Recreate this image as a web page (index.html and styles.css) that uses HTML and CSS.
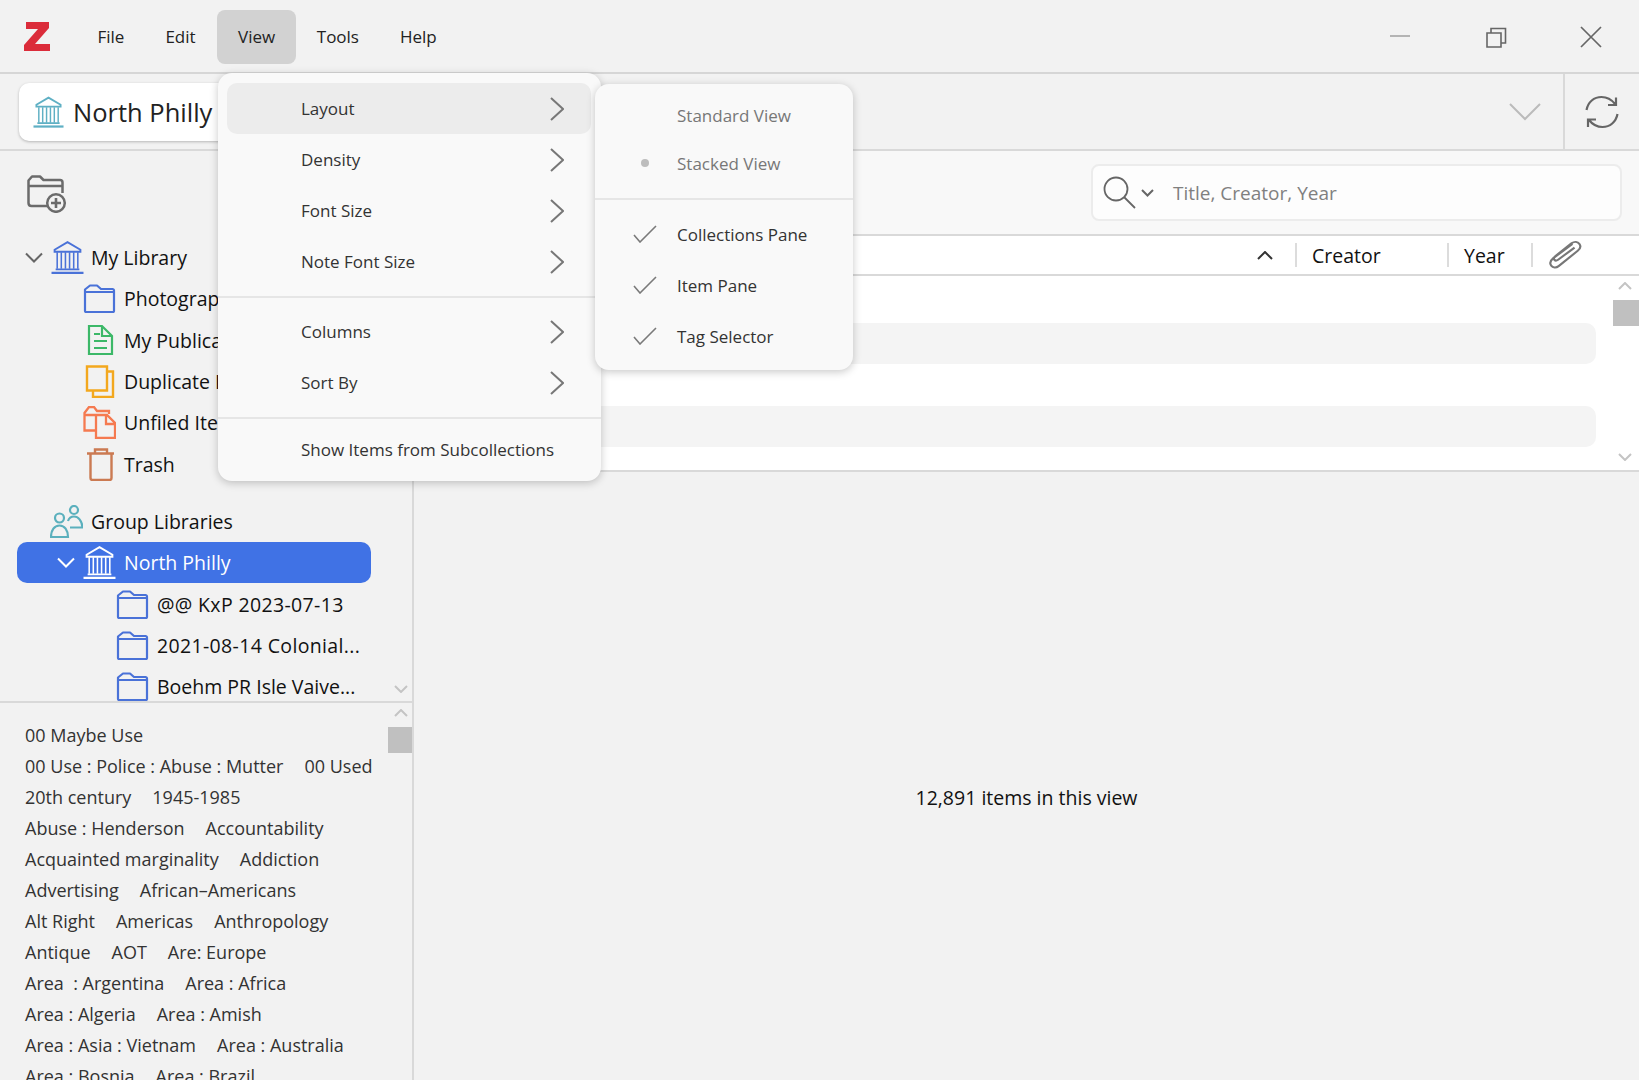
FILE: index.html
```html
<!DOCTYPE html>
<html lang="en">
  <head>
    <meta charset="UTF-8" />
    <meta name="viewport" content="width=device-width, initial-scale=1.0" />
    <title>Zotero</title>
    <link rel="stylesheet" href="styles.css">
  </head>
  <body>
    <svg class="defs" width="0" height="0">
      <symbol id="library" viewBox="0 0 32 32">
        <path d="M3.500 8.500 16 1.200l12.500 7.300v2h-25z M4.500 27.500h23" fill="none" stroke="currentColor" stroke-width="1.900"/>
        <path d="M0.500 31h31" fill="none" stroke="currentColor" stroke-width="2.300"/>
        <path d="M6 11v16 M10 11v16 M14 11v16 M18 11v16 M22 11v16 M26 11v16" fill="none" stroke="currentColor" stroke-width="1.500"/>
      </symbol>
      <symbol id="folder" viewBox="0 0 33 29">
        <path d="M2 8V5.500L7 1.500h7l4 3.500h11.500a1.500 1.500 0 0 1 1.500 1.500V8 M2 8h29v19a1 1 0 0 1-1 1H3a1 1 0 0 1-1-1z" fill="none" stroke="currentColor" stroke-width="2.200" stroke-linejoin="round"/>
      </symbol>
      <symbol id="chev-right" viewBox="0 0 14 24">
        <path d="M1 1l12 11L1 23" fill="none" stroke="currentColor" stroke-width="2"/>
      </symbol>
      <symbol id="check" viewBox="0 0 24 18">
        <path d="M1 10l6 7L23 1" fill="none" stroke="currentColor" stroke-width="1.600"/>
      </symbol>
    </svg>

    <div class="app">
      <header class="titlebar">
        <svg class="logo" viewBox="0 0 26 29"><path d="M2 0h23v6L11 22h15v7H0v-6L14 7H2z" fill="#db2c3a"/></svg>
        <nav class="menubar">
          <span class="menubar-item">File</span>
          <span class="menubar-item">Edit</span>
          <span class="menubar-item active">View</span>
          <span class="menubar-item">Tools</span>
          <span class="menubar-item">Help</span>
        </nav>
        <div class="winctl">
          <svg class="ctl-min" viewBox="0 0 20 2"><path d="M0 1h20" stroke="#777" stroke-width="1"/></svg>
          <svg class="ctl-restore" viewBox="0 0 21 21"><path d="M1 6h14v14H1z M5 6V1.500h14.500V16H15" fill="none" stroke="#666" stroke-width="1.600"/></svg>
          <svg class="ctl-close" viewBox="0 0 22 22"><path d="M1 1l20 20 M21 1 1 21" fill="none" stroke="#666" stroke-width="1.700"/></svg>
        </div>
      </header>

      <div class="tabbar">
        <div class="tab">
          <svg class="tab-icon"><use href="#library"/></svg>
          <span>North Philly</span>
        </div>
        <svg class="tabs-chev" viewBox="0 0 32 18"><path d="M1 1l15 15L31 1" fill="none" stroke="#bbb" stroke-width="2"/></svg>
        <div class="sync">
          <svg viewBox="0 0 34 34" width="34" height="34"><path d="M1.500 15C3 7 9 2 16.500 2c5.500 0 10 2.500 13.500 7 M31 2.500V10h-8 M32.500 19c-1.500 8-7.500 13-15 13-5.500 0-10-2.500-13.500-7 M3 32v-7.500h8" fill="none" stroke="#666" stroke-width="2.200"/></svg>
        </div>
      </div>

      <div class="main">
        <aside class="sidebar">
          <div class="sidebar-top">
            <svg class="add-coll" viewBox="0 0 40 38">
              <path d="M1.500 28V5.500L5 1.500h8l3.500 3.500H33c1.500 0 2.500 1 2.500 2.500V18 M1.500 11H35.500 M1.500 28c0 1.500 1 3 3 3H20" fill="none" stroke="#6b6b6b" stroke-width="2.500" stroke-linejoin="round"/>
              <circle cx="29" cy="28" r="8.800" fill="#f2f2f2" stroke="#6b6b6b" stroke-width="2.500"/>
              <path d="M29 23v10 M24 28h10" stroke="#6b6b6b" stroke-width="2.600"/>
            </svg>
          </div>
          <div class="tree">
            <div class="row lvl0">
              <svg class="twisty" viewBox="0 0 18 12"><path d="M1 1.500l8 8 8-8" fill="none" stroke="#666" stroke-width="2"/></svg>
              <svg class="ico ico-lib"><use href="#library"/></svg>
              <span>My Library</span>
            </div>
            <div class="row lvl1">
              <svg class="ico ico-folder"><use href="#folder"/></svg>
              <span>Photographs</span>
            </div>
            <div class="row lvl1">
              <svg class="ico" viewBox="0 0 33 33"><path d="M6 2h13l10 10v18H6z M19 2v10h10 M11 10h6 M11 17h13 M11 24h13" fill="none" stroke="#3cb868" stroke-width="2.200"/></svg>
              <span>My Publications</span>
            </div>
            <div class="row lvl1">
              <svg class="ico" viewBox="0 0 33 33"><path d="M4 1.500h20v24H4z M24 6.500h6V32H10v-6.500" fill="none" stroke="#f3a81e" stroke-width="2.400"/></svg>
              <span>Duplicate Items</span>
            </div>
            <div class="row lvl1">
              <svg class="ico" viewBox="0 0 33 33"><path d="M12 24.500H1.500V7L6 1h5l3 4h12v3 M1.500 9H13 M13 9h11l8 8v15H13z M23 9v9h9" fill="none" stroke="#f57a50" stroke-width="2.300"/></svg>
              <span>Unfiled Items</span>
            </div>
            <div class="row lvl1">
              <svg class="ico" viewBox="0 0 33 33"><path d="M4 5.500h27 M12 5V1.500h12V5 M7.500 6v24a2 2 0 0 0 2 2h17a2 2 0 0 0 2-2V6" fill="none" stroke="#cb7a52" stroke-width="2.400"/></svg>
              <span>Trash</span>
            </div>
            <div class="row lvl0 groups">
              <svg class="ico" viewBox="0 0 33 33"><circle cx="24" cy="5" r="4" fill="none" stroke="#5bb0bd" stroke-width="2.200"/><circle cx="9.500" cy="13" r="4.500" fill="none" stroke="#5bb0bd" stroke-width="2.200"/><path d="M1 32c0-7 3.500-11.500 8.500-11.500S18 25 18 32z M18 16c1-3 3.500-4.500 6-4.500 4 0 8 4 8.500 11H20" fill="none" stroke="#5bb0bd" stroke-width="2.200"/></svg>
              <span>Group Libraries</span>
            </div>
            <div class="row selected">
              <svg class="twisty" viewBox="0 0 18 12"><path d="M1 1.500l8 8 8-8" fill="none" stroke="#fff" stroke-width="2"/></svg>
              <svg class="ico ico-white"><use href="#library"/></svg>
              <span>North Philly</span>
            </div>
            <div class="row lvl2">
              <svg class="ico ico-folder"><use href="#folder"/></svg>
              <span class="dated">@@ KxP 2023-07-13</span>
            </div>
            <div class="row lvl2">
              <svg class="ico ico-folder"><use href="#folder"/></svg>
              <span class="dated">2021-08-14 Colonial...</span>
            </div>
            <div class="row lvl2">
              <svg class="ico ico-folder"><use href="#folder"/></svg>
              <span>Boehm PR Isle Vaive...</span>
            </div>
            <svg class="scroll-arrow tree-down" viewBox="0 0 14 8"><path d="M1 1l6 6 6-6" fill="none" stroke="#c4c4c4" stroke-width="2"/></svg>
          </div>
          <div class="tags">
            <svg class="scroll-arrow tags-up" viewBox="0 0 14 8"><path d="M1 7l6-6 6 6" fill="none" stroke="#c4c4c4" stroke-width="2"/></svg>
            <div class="scroll-thumb tags-thumb"></div>
            <div class="tag-line"><span>00 Maybe Use</span></div>
            <div class="tag-line"><span>00 Use : Police : Abuse : Mutter</span><span>00 Used</span></div>
            <div class="tag-line"><span>20th century</span><span>1945-1985</span></div>
            <div class="tag-line"><span>Abuse : Henderson</span><span>Accountability</span></div>
            <div class="tag-line"><span>Acquainted marginality</span><span>Addiction</span></div>
            <div class="tag-line"><span>Advertising</span><span>African–Americans</span></div>
            <div class="tag-line"><span>Alt Right</span><span>Americas</span><span>Anthropology</span></div>
            <div class="tag-line"><span>Antique</span><span>AOT</span><span>Are: Europe</span></div>
            <div class="tag-line"><span>Area &nbsp;: Argentina</span><span>Area : Africa</span></div>
            <div class="tag-line"><span>Area : Algeria</span><span>Area : Amish</span></div>
            <div class="tag-line"><span>Area : Asia : Vietnam</span><span>Area : Australia</span></div>
            <div class="tag-line"><span>Area : Bosnia</span><span>Area : Brazil</span></div>
          </div>
        </aside>

        <section class="content">
          <div class="toolbar">
            <div class="search">
              <svg class="search-ico" viewBox="0 0 33 33"><circle cx="13" cy="13" r="11.500" fill="none" stroke="#666" stroke-width="1.800"/><path d="M21 21l11 11" stroke="#666" stroke-width="1.800"/></svg>
              <svg class="search-chev" viewBox="0 0 13 8"><path d="M1 1l5.500 5.500L12 1" fill="none" stroke="#666" stroke-width="2"/></svg>
              <span class="search-text">Title, Creator, Year</span>
            </div>
          </div>
          <div class="col-head">
            <div class="col-title">
              <svg class="sort-caret" viewBox="0 0 16 9"><path d="M1 8l7-7 7 7" fill="none" stroke="#333" stroke-width="2"/></svg>
            </div>
            <div class="col col-creator"><i class="col-sep"></i><span>Creator</span></div>
            <div class="col col-year"><i class="col-sep"></i><span>Year</span></div>
            <div class="col col-attach">
              <i class="col-sep"></i>
              <svg class="clip" viewBox="0 0 32 28"><path d="M23 3.500 5 17c-3 2.500-3.500 5-2 7s4.500 2.500 7 .500L28 10c2.500-2 3-4.500 1.500-6.500S25 1 22 3L7 15c-1.500 1.200-1.800 2.500-1 3.500s2.200 1 3.500 0L25 7" fill="none" stroke="#777" stroke-width="2"/></svg>
            </div>
          </div>
          <div class="items">
            <div class="item-row"></div>
            <div class="item-row alt"></div>
            <div class="item-row"></div>
            <div class="item-row alt"></div>
            <svg class="scroll-arrow items-up" viewBox="0 0 14 8"><path d="M1 7l6-6 6 6" fill="none" stroke="#c4c4c4" stroke-width="2"/></svg>
            <div class="scroll-thumb items-thumb"></div>
            <svg class="scroll-arrow items-down" viewBox="0 0 14 8"><path d="M1 1l6 6 6-6" fill="none" stroke="#c4c4c4" stroke-width="2"/></svg>
          </div>
          <div class="item-pane">12,891 items in this view</div>
        </section>
      </div>
    </div>

    <div class="menu view-menu">
      <div class="menu-row hover"><span>Layout</span><svg class="arrow"><use href="#chev-right"/></svg></div>
      <div class="menu-row"><span>Density</span><svg class="arrow"><use href="#chev-right"/></svg></div>
      <div class="menu-row"><span>Font Size</span><svg class="arrow"><use href="#chev-right"/></svg></div>
      <div class="menu-row"><span>Note Font Size</span><svg class="arrow"><use href="#chev-right"/></svg></div>
      <div class="menu-sep"></div>
      <div class="menu-row"><span>Columns</span><svg class="arrow"><use href="#chev-right"/></svg></div>
      <div class="menu-row"><span>Sort By</span><svg class="arrow"><use href="#chev-right"/></svg></div>
      <div class="menu-sep"></div>
      <div class="menu-row"><span>Show Items from Subcollections</span></div>
    </div>

    <div class="menu layout-menu">
      <div class="sub-row disabled"><span>Standard View</span></div>
      <div class="sub-row disabled"><i class="dot"></i><span>Stacked View</span></div>
      <div class="menu-sep"></div>
      <div class="sub-row tall"><svg class="check"><use href="#check"/></svg><span>Collections Pane</span></div>
      <div class="sub-row tall"><svg class="check"><use href="#check"/></svg><span>Item Pane</span></div>
      <div class="sub-row tall"><svg class="check"><use href="#check"/></svg><span>Tag Selector</span></div>
    </div>
  </body>
</html>
```

FILE: styles.css
```css
body {
  margin: 0;
  font-family: "Open Sans", "Noto Sans", sans-serif;
  color: #111;
  background-color: #f2f2f2;
  overflow: hidden;
}

.defs {
  position: absolute;
}

.app {
  display: flex;
  flex-direction: column;
  height: 1080px;
  overflow: hidden;
}

/* title bar */
.titlebar {
  display: flex;
  align-items: center;
  height: 71px;
  padding-top: 1px;
  border-bottom: 2px solid #d6d6d6;
}

.logo {
  width: 26px;
  height: 29px;
  margin-left: 24px;
  margin-right: 27px;
}

.menubar {
  display: flex;
  align-items: center;
  font-size: 17px;
  color: #222;
}

.menubar-item {
  display: flex;
  align-items: center;
  justify-content: center;
  height: 54px;
  padding: 0 20.500px;
  border-radius: 8px;
}

.menubar-item.active {
  margin-left: 1px;
  padding: 0 21px;
  background-color: #d2d2d2;
}

.winctl {
  display: flex;
  align-items: center;
  margin-left: auto;
  margin-right: 37px;
  padding-top: 1px;
}

.ctl-min {
  width: 20px;
  height: 2px;
  margin-bottom: 2px;
}

.ctl-restore {
  width: 21px;
  height: 21px;
  margin-left: 76px;
}

.ctl-close {
  width: 22px;
  height: 22px;
  margin-left: 73px;
}

/* tab bar */
.tabbar {
  display: flex;
  align-items: center;
  height: 75px;
  border-bottom: 2px solid #d9d9d9;
}

.tab {
  display: flex;
  align-items: center;
  gap: 9px;
  width: 340px;
  height: 58px;
  margin-left: 19px;
  padding-left: 14px;
  box-sizing: border-box;
  background-color: #fff;
  border-radius: 10px;
  box-shadow: 0 1px 3px rgba(0, 0, 0, 0.25);
  font-size: 25.500px;
  color: #222;
}

.tab-icon {
  width: 31px;
  height: 32px;
  color: #5fb0c4;
}

.tabs-chev {
  width: 32px;
  height: 18px;
  margin-left: auto;
  margin-right: 22px;
}

.sync {
  display: flex;
  align-items: center;
  justify-content: center;
  width: 74px;
  height: 75px;
  border-left: 2px solid #d9d9d9;
}

/* main area */
.main {
  display: flex;
  flex: 1;
  min-height: 0;
}

.sidebar {
  display: flex;
  flex-direction: column;
  width: 412px;
  border-right: 2px solid #d9d9d9;
  flex-shrink: 0;
}

.sidebar-top {
  height: 86px;
  box-sizing: border-box;
  padding: 24px 0 0 27px;
}

.add-coll {
  width: 40px;
  height: 38px;
}

.tree {
  position: relative;
  height: 464px;
  overflow: hidden;
  border-bottom: 2px solid #d9d9d9;
  font-size: 19.500px;
}

.row {
  display: flex;
  align-items: center;
  height: 41.300px;
  white-space: nowrap;
}

.row span {
  margin-left: 8px;
}

.row span.dated {
  letter-spacing: 0.35px;
}

.lvl0 {
  padding-left: 25px;
}

.lvl0 .twisty + .ico + span {
  margin-left: 7px;
}

.lvl1 {
  padding-left: 83px;
}

.lvl2 {
  padding-left: 116px;
}

.groups {
  margin-top: 16px;
  padding-left: 50px;
}

.twisty {
  width: 18px;
  height: 12px;
  margin-right: 8px;
}

.ico {
  width: 33px;
  height: 33px;
  flex-shrink: 0;
}

.ico-lib {
  color: #4a72d8;
}

.ico-white {
  color: #fff;
}

.ico-folder {
  height: 29px;
  color: #4a72d8;
}

.selected {
  margin-left: 17px;
  width: 354px;
  padding-left: 40px;
  box-sizing: border-box;
  background-color: #4072e5;
  border-radius: 10px;
  color: #fff;
}

.scroll-arrow {
  position: absolute;
  width: 14px;
  height: 8px;
}

.scroll-thumb {
  position: absolute;
  width: 26px;
  height: 26px;
  background-color: #c0c0c0;
}

.tree-down {
  left: 394px;
  bottom: 8px;
}

/* tag selector */
.tags {
  position: relative;
  flex: 1;
  min-height: 0;
  overflow: hidden;
  padding: 16px 0 0 25px;
  font-size: 18px;
  color: #333;
}

.tags-up {
  left: 394px;
  top: 6px;
}

.tags-thumb {
  left: 388px;
  top: 24px;
  width: 24px;
}

.tag-line {
  display: flex;
  align-items: center;
  gap: 21px;
  height: 31px;
  white-space: nowrap;
}

/* right side */
.content {
  display: flex;
  flex-direction: column;
  flex: 1;
  min-width: 0;
}

.toolbar {
  display: flex;
  justify-content: flex-end;
  align-items: center;
  height: 83px;
  padding-right: 17px;
  background-color: #f8f8f8;
}

.search {
  display: flex;
  align-items: center;
  width: 531px;
  height: 57px;
  box-sizing: border-box;
  background-color: #fdfdfd;
  border: 2px solid #ececec;
  border-radius: 8px;
  padding-left: 10px;
}

.search-ico {
  width: 33px;
  height: 33px;
}

.search-chev {
  width: 13px;
  height: 8px;
  margin-left: 5px;
}

.search-text {
  margin-left: 19px;
  font-size: 19px;
  color: #808080;
}

.col-head {
  display: flex;
  align-items: center;
  height: 38px;
  border-top: 2px solid #d9d9d9;
  border-bottom: 2px solid #d9d9d9;
  background-color: #fff;
  font-size: 19.500px;
}

.col-title {
  display: flex;
  justify-content: flex-end;
  flex: 1;
  padding-right: 22px;
}

.sort-caret {
  width: 16px;
  height: 9px;
}

.col {
  display: flex;
  align-items: center;
}

.col-sep {
  width: 2px;
  height: 24px;
  background-color: #dcdcdc;
  margin-right: 15px;
}

.col-creator {
  width: 152px;
}

.col-year {
  width: 84px;
}

.col-attach {
  width: 108px;
}

.clip {
  width: 34px;
  height: 30px;
}

.items {
  position: relative;
  height: 189px;
  padding-top: 5px;
  background-color: #fff;
  border-bottom: 2px solid #d9d9d9;
}

.item-row {
  height: 41.500px;
  margin-right: 43px;
  border-radius: 10px;
}

.item-row.alt {
  background-color: #f4f4f4;
}

.items-up {
  right: 7px;
  top: 6px;
}

.items-thumb {
  right: 0;
  top: 24px;
}

.items-down {
  right: 7px;
  bottom: 9px;
}

.item-pane {
  display: flex;
  flex: 1;
  align-items: center;
  justify-content: center;
  font-size: 19.500px;
  padding-top: 42px;
}

/* menus */
.menu {
  position: absolute;
  box-sizing: border-box;
  background-color: #f9f9f9;
  border-radius: 14px;
  box-shadow: 0 2px 8px rgba(0, 0, 0, 0.22);
  font-size: 17px;
  color: #333;
}

.view-menu {
  left: 218px;
  top: 73px;
  width: 383px;
  height: 408px;
  padding-top: 10px;
}

.layout-menu {
  left: 595px;
  top: 84px;
  width: 258px;
  height: 286px;
  padding-top: 7px;
}

.menu-row {
  display: flex;
  align-items: center;
  height: 51px;
  margin: 0 10px 0 9px;
  padding-left: 74px;
  border-radius: 10px;
}

.menu-row.hover {
  background-color: #ececec;
}

.arrow {
  width: 14px;
  height: 24px;
  margin-left: auto;
  margin-right: 27px;
  color: #777;
}

.menu-sep {
  height: 2px;
  background-color: #e6e6e6;
  margin: 8.500px 0;
}

.layout-menu .menu-sep {
  margin: 11px 0 8.500px;
}

.view-menu .menu-row:last-child {
  height: 44px;
}

.sub-row {
  display: flex;
  align-items: center;
  position: relative;
  height: 48px;
  padding-left: 82px;
}

.sub-row.tall {
  height: 51px;
}

.disabled {
  color: #777;
}

.dot {
  position: absolute;
  left: 46px;
  width: 8px;
  height: 8px;
  border-radius: 50%;
  background-color: #bdbdbd;
}

.check {
  position: absolute;
  left: 38px;
  width: 24px;
  height: 18px;
  color: #7a7a7a;
}
```
